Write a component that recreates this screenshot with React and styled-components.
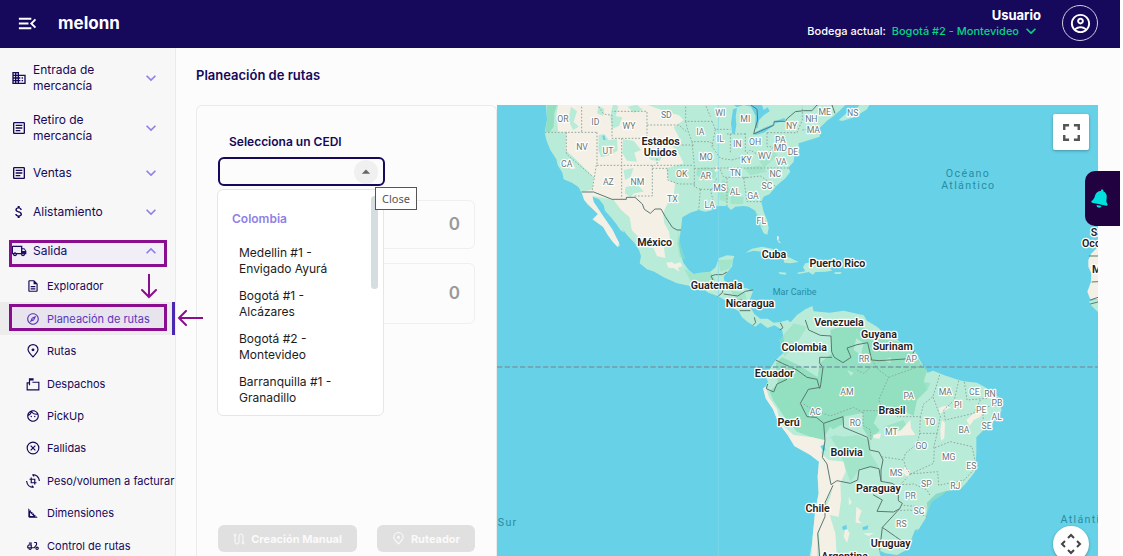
import React from "react";
import styled, { createGlobalStyle } from "styled-components";
import {
  MdMenuOpen,
  MdBusiness,
  MdOutlineArticle,
  MdAttachMoney,
  MdOutlineLocalShipping,
  MdOutlineDescription,
  MdOutlineExplore,
  MdOutlineFace,
  MdOutlineSquareFoot,
  MdOutlineDeliveryDining,
  MdOutlineAccountCircle,
  MdFullscreen,
  MdExpandMore,
  MdExpandLess,
  MdArrowDropUp,
} from "react-icons/md";
import { FaBell } from "react-icons/fa";

const PinIcon = ({ size }) => (
  <LineIcon width={size} height={size} viewBox="0 0 24 24">
    <path d="M12 22C6 16 3.500 13 3.500 9.500A8.500 8.500 0 0 1 20.500 9.500C20.500 13 18 16 12 22Z" />
    <circle cx="12" cy="10" r="1.500" fill="currentColor" />
  </LineIcon>
);

const MailboxIcon = ({ size }) => (
  <LineIcon width={size} height={size} viewBox="0 0 24 24">
    <path d="M5 10H2V22H22V9H11M6 14V3H12V5H7" />
  </LineIcon>
);

const FailedIcon = ({ size }) => (
  <LineIcon width={size} height={size} viewBox="0 0 24 24">
    <circle cx="12" cy="12" r="10" />
    <path d="M8 8L16 16M16 8L8 16" />
  </LineIcon>
);

const RotateIcon = ({ size }) => (
  <LineIcon width={size} height={size} viewBox="0 0 24 24">
    <path d="M9 6V15H18M6 9H15V18M11 1C18 1 22 5 23 12M11 1L14 4M13 23C6 23 2 19 1 12M13 23L10 20" />
  </LineIcon>
);

const RouteIcon = ({ size }) => (
  <LineIcon width={size} height={size} viewBox="0 0 24 24">
    <circle cx="4" cy="4" r="2" />
    <circle cx="20" cy="20" r="2" />
    <path d="M4 6V18A4 4 0 0 0 12 18V6A4 4 0 0 1 20 6V18" />
  </LineIcon>
);

const menu = [
  { name: "Entrada de mercancía", icon: MdBusiness, tall: true },
  { name: "Retiro de mercancía", icon: MdOutlineArticle, tall: true },
  { name: "Ventas", icon: MdOutlineArticle },
  { name: "Alistamiento", icon: MdAttachMoney },
  { name: "Salida", icon: MdOutlineLocalShipping, open: true },
];

const submenu = [
  { name: "Explorador", icon: MdOutlineDescription },
  { name: "Planeación de rutas", icon: MdOutlineExplore, active: true },
  { name: "Rutas", icon: PinIcon },
  { name: "Despachos", icon: MailboxIcon },
  { name: "PickUp", icon: MdOutlineFace },
  { name: "Fallidas", icon: FailedIcon },
  { name: "Peso/volumen a facturar", icon: RotateIcon },
  { name: "Dimensiones", icon: MdOutlineSquareFoot },
  { name: "Control de rutas", icon: MdOutlineDeliveryDining },
];

const cedis = [
  "Medellin #1 - Envigado Ayurá",
  "Bogotá #1 - Alcázares",
  "Bogotá #2 - Montevideo",
  "Barranquilla #1 - Granadillo",
];

// [text, x, y] in the units of the map group
const northStates = [
  ["OR", 198, 58], ["ID", 295, 66], ["WY", 396, 77], ["SD", 508, 45], ["WI", 670, 40],
  ["MI", 745, 58], ["NY", 884, 78], ["NH", 943, 58], ["MA", 949, 90], ["ME", 983, 35],
  ["NS", 1067, 40], ["IA", 610, 96], ["IL", 670, 118], ["IN", 721, 132], ["OH", 774, 125],
  ["PA", 850, 120], ["MD", 850, 144], ["DE", 888, 157], ["NV", 255, 141], ["UT", 333, 154],
  ["CA", 209, 192], ["MO", 627, 170], ["KY", 748, 181], ["WV", 803, 168], ["VA", 853, 187],
  ["AZ", 334, 246], ["NM", 421, 246], ["OK", 554, 223], ["AR", 626, 227], ["TN", 715, 219],
  ["NC", 835, 222], ["SC", 810, 259], ["MS", 668, 264], ["AL", 714, 275], ["GA", 768, 289],
  ["TX", 526, 296], ["LA", 638, 316], ["FL", 793, 363],
];

const southStates = [
  ["RR", 501, 118], ["AP", 643, 118], ["AM", 450, 216], ["PA", 635, 227], ["MA", 745, 216],
  ["CE", 832, 216], ["RN", 879, 222], ["PB", 900, 249], ["PI", 783, 256], ["PE", 853, 270],
  ["AL", 899, 291], ["SE", 869, 318], ["AC", 355, 275], ["RO", 475, 310], ["MT", 583, 337],
  ["TO", 699, 307], ["BA", 801, 331], ["GO", 673, 377], ["MG", 755, 412], ["ES", 823, 438],
  ["MS", 597, 460], ["SP", 688, 491], ["RJ", 775, 499], ["PR", 640, 529], ["SC", 666, 572],
  ["RS", 613, 612],
];

const northCountries = [
  ["Estados", 491, 126], ["Unidos", 490, 157], ["México", 473, 428], ["Cuba", 831, 465],
  ["Puerto Rico", 1021, 492], ["Guatemala", 659, 556], ["Nicaragua", 759, 610],
];

const southCountries = [
  ["Venezuela", 426, 9], ["Guyana", 546, 43], ["Surinam", 587, 81], ["Colombia", 322, 83],
  ["Ecuador", 232, 161], ["Brasil", 585, 273], ["Perú", 275, 308], ["Bolivia", 449, 399],
  ["Paraguay", 544, 506], ["Chile", 362, 565], ["Uruguay", 581, 672], ["Argentina", 443, 709],
];

const Labels = ({ items, as: Tag }) =>
  items.map(([text, x, y]) => (
    <Tag key={text + x} x={x} y={y}>
      {text}
    </Tag>
  ));

const Map = () => (
  <MapSvg viewBox="497 105 601 451" preserveAspectRatio="xMidYMid slice" role="img" aria-label="Mapa">
    <g transform="translate(497 100) scale(0.33333)">
      {/* North and Central America */}
      <Land d="M146 0L150 60 143 97 148 120 160 150 178 178 182 195 196 218 200 238 225 248 245 262 254 280 260 298 272 314 285 325 303 342 286 358 300 368 318 380 332 404 346 424 362 442 369 436 364 424 350 406 344 388 328 364 314 342 300 320 290 306 286 290 306 298 320 315 324 332 342 352 358 372 370 390 382 398 378 388 395 410 412 428 426 450 432 468 428 490 450 508 472 515 500 532 540 550 580 558 606 558 634 578 662 588 690 604 702 620 725 634 735 652 752 666 775 680 790 668 812 684 832 676 850 686 862 694 890 675 872 660 850 666 830 668 812 656 790 656 772 642 762 625 758 600 768 574 750 565 720 560 700 552 682 542 680 530 692 515 705 500 708 480 712 468 690 466 665 475 656 502 640 515 610 518 590 522 575 510 560 490 550 460 545 430 550 400 552 385 556 352 580 338 605 330 625 335 648 330 640 320 672 318 690 318 702 330 715 320 740 318 755 320 775 332 782 352 786 368 800 400 811 404 815 385 810 360 800 335 793 305 800 290 818 282 840 256 865 235 880 215 874 203 890 185 892 165 905 150 905 130 930 122 968 110 968 84 990 62 1010 48 1030 30 1060 0Z" />
      <Land d="M1025 60L1050 38 1080 24 1100 0H1125L1110 28 1072 52 1035 63Z" />
      <Dark d="M150 0H185L172 40 170 80 158 97 145 95 150 60Z" />
      <Cream d="M186 0L178 45 184 97H208L206 150 236 178 268 210 290 232 286 268 255 276 262 300 285 325 303 342 288 358 318 380 332 404 346 424 362 440 366 428 346 388 314 342 290 306 286 288 310 292 350 300 372 330 398 352 404 392 434 420 440 440 470 445 480 468 505 474 500 440 520 425 516 395 502 370 498 340 512 310 530 288 534 250 515 240 508 205 540 196 560 190 545 160 528 140 545 110 530 82 560 60 545 45 520 40 452 15V0Z" />
      <Cream d="M508 488L524 486 532 492 550 487 556 498 542 503 548 515 530 504 514 503Z" />
      <Land d="M178 130L195 150 210 178 232 205 262 225 284 250 270 252 240 222 215 210 190 190ZM305 105L322 102 335 120 360 118 362 152 340 165 312 172 304 150ZM378 118L410 122 432 150 412 158 420 185 390 182 376 160ZM380 210L410 204 400 232 384 240ZM385 262L420 252 440 275 412 280 400 292 384 280ZM350 0L364 22 356 48 376 52 366 78 345 86 340 50ZM305 18L322 26 318 48 300 40ZM222 20L240 34 230 66 246 80 228 90 214 60ZM330 300L352 306 372 330 398 355 404 390 425 412 440 440 420 430 390 405 370 375 348 350ZM392 20L420 14 438 30 410 38ZM448 160L478 168 500 160 488 184 462 180Z" />
      <Dark d="M600 205L632 200 660 212 654 235 620 240 598 225ZM680 235L700 270 690 305 668 300 664 262ZM740 205L790 196 810 215 760 226ZM780 172L830 150 842 165 800 205ZM560 505L590 522 640 515 655 540 620 552 582 545ZM665 480L708 478 700 505 670 515ZM700 570L745 580 750 610 720 600ZM545 395L552 440 566 480 548 470 540 430ZM775 335L792 350 800 385 790 378ZM700 285L740 290 738 312 700 312Z" opacity="0.55" />
      <Cream d="M652 202L662 198 665 212 654 216ZM195 182L220 178 236 205 222 208Z" />
      {/* lakes */}
      <Water d="M708 28L720 24 716 50 718 75 714 100 706 102 702 70ZM690 0H790L800 30 812 22 818 34 800 46 786 60 782 84 774 86 776 48 762 20 740 15 720 22ZM770 100L800 84 830 72 828 78 800 98 775 105ZM828 66L862 54 866 60 836 70ZM316 108L322 106 326 120 319 120Z" />
      {/* islands */}
      <Land d="M745 458L765 446 795 440 825 446 850 462 880 474 905 486 880 490 862 488 860 478 830 474 800 456 770 452ZM845 516L868 518 866 524 848 522ZM900 518L925 514 918 502 925 490 950 486 975 494 1000 506 1005 512 985 515 955 516 948 524 935 516 905 522ZM1012 517L1034 516 1030 522 1014 522Z" />
      <Cream d="M840 408L846 410 844 422 852 428 846 428 840 418Z" />
      {/* west coast of Africa */}
      <Cream d="M1803 440L1782 462 1774 480 1774 500 1783 520 1782 545 1771 575 1780 598 1803 598Z" />
      <Land d="M1803 598L1776 604 1784 618 1803 636Z" />
      <Border d="M1803 468H1776M1803 545L1784 546M1803 592L1780 600M1803 606L1780 612" />
      <StateLine d="M143 97H300M208 97V162L290 232M300 97V196M254 0V97M305 20L320 42 345 46V115H450V34H345M450 75H545L570 96M300 196H590M298 196L286 270M374 115V296M466 196V288H412M466 205H512V240L545 252H598M566 0V64H645M566 64L572 90 585 125H640L650 140M585 125L592 196V260L610 268M592 205H668L680 232H750M610 268H645M610 268L605 330M645 268L660 232M690 234V318M740 234L750 305H795M740 234L790 228 840 262M705 180L740 170 760 150 800 175 830 140M650 204H875M645 64L655 88H700M655 88L645 140 670 175 705 180M700 102V160M745 100V160M690 102H745M810 98V140L890 142M810 98H900M900 98L916 60V20M916 90L968 86M620 0L640 50M480 166V196M545 135H590M640 268L650 310" />
      <Border d="M254 276L290 276 345 298H388V292H414L436 312 442 328 460 340 474 327H492L505 350 526 382 540 390H552M762 15L780 28 782 60 774 86 770 102 830 76 832 64H866L870 56 895 35 920 32H945L960 15 980 10 990 0M1005 15L1014 40M648 540L642 528 655 524H676L690 516M662 590L676 578 682 552M680 582L722 588 745 574 768 570M690 605L735 600M728 632H760M772 652L776 668 768 676M850 668L858 684 848 690" />
      <Seam d="M664 15V1380" />

      <g transform="translate(600 660)">
        {/* South America */}
        <Land d="M255 28L262 70 258 100 236 120 222 142 205 168 213 185 200 208 206 235 228 268 245 310 272 345 292 378 340 405 366 425 362 470 365 520 355 570 350 620 345 670 336 720H555L545 690 565 700 600 705 624 692 648 655 670 620 686 595 692 565 690 548 718 522 752 512 790 508 810 486 834 455 838 400 838 352 862 328 892 302 914 272 905 232 862 200 840 188 800 184 778 178 740 165 708 152 692 158 680 140 664 112 655 95 624 80 602 60 562 40 540 20 510 2 500 -14 440 -28 398 -22 350 -26 346 -42 325 -32 300 -15 282 5Z" />
        <Dark d="M400 30L450 14 500 22 530 52 600 64 655 100 672 132 690 152 680 185 690 210 660 240 650 288 600 262 545 275 530 310 548 330 520 360 497 325 498 278 440 290 430 350 400 320 385 345 384 362 340 350 300 335 262 290 228 240 218 215 242 190 236 130 255 112 310 138 362 172 368 130 405 100Z" />
        <Dark d="M246 60L290 10 330 20 300 70 262 110ZM385 360L440 330 520 360 520 400 545 440 490 445 460 486 430 400 400 350Z" opacity="0.55" />
        <Dark d="M690 548L715 522 750 512 735 526 705 545 690 580ZM620 690L655 640 668 622 640 665ZM560 320L620 300 632 325 580 345ZM640 178L700 190 690 212ZM230 205L262 232 300 262 330 300 300 290 260 260Z" opacity="0.7" />
        <Land d="M478 55L500 70 492 105 470 90ZM405 330L430 316 470 325 480 345 440 350 412 345ZM296 68L330 40 352 60 390 50 372 90 340 100 300 100ZM450 150L470 158 462 168ZM560 120L582 112 580 130Z" />
        <Cream d="M198 205L206 200 216 232 240 268 250 310 290 345 345 352 382 360 372 400 395 420 440 425 446 455 430 490 432 540 425 590 398 585 415 640 420 720H370L366 640 380 580 400 530 408 500 390 470 378 415 366 425 340 405 292 378 272 345 245 310 228 268 206 235Z" />
        <Cream d="M366 425L378 415 390 470 410 498 385 550 380 600 362 640 360 720H342L348 640 355 570 365 520 362 470Z" />
        <Cream d="M735 300L744 310 742 355 732 362 730 330ZM528 345L552 340 548 356 530 354ZM570 330L610 332 640 300 642 325 655 345 630 346 600 348ZM622 440L640 452 634 474 618 458ZM726 264L742 258 762 262 738 274 728 284ZM808 300L828 282 862 272 850 290 830 300 818 318ZM478 560L494 572 484 600 495 610 476 608ZM455 530L464 548 456 556ZM446 620L458 640 450 668 440 650ZM500 640L530 640 514 648ZM786 320L806 318 808 340 790 336Z" />
        <Water d="M370 378L382 374 386 392 376 390ZM435 620L448 614 450 628 438 630ZM496 622L514 616 512 628 498 630ZM642 660L654 630 664 628 652 652Z" />
        <Border d="M325 0L335 30 370 46 402 48 404 96 412 112 438 128 462 112 450 84 480 74 512 68 524 120 546 122 640 116 652 92M405 112H368V130L378 142 370 202 334 208 310 250 330 290 358 292 380 310 438 290 440 322 512 352 518 390 546 396 558 420 552 450 552 484 585 490 604 502 604 542 616 550 608 566 590 576 540 574 556 540 528 524M236 120L256 130 300 150 330 172 360 178 368 206M270 178L240 192 230 216 208 206 212 192M380 310L384 362 376 412 390 432 402 494 420 482 460 490 482 480 486 450 520 440 546 446 552 484M408 496L384 548V590L362 640 368 710M608 566L556 622 548 690M556 622L596 650 638 680" />
        <StateLine d="M524 120L545 150 575 172 545 240 560 272H498V316L520 330 522 362M575 172L650 145 682 134M320 252L345 268 400 288 470 262 498 278M480 150L500 160 524 140M728 165L708 230 680 252 670 290H600M670 290L668 340 660 372 625 400 620 420 552 410M668 340L720 340 730 290 708 230M785 182L772 240 740 270 745 300M802 186L810 240 870 235M850 240L830 280 745 300M870 225L905 235M720 340L710 385 760 365 825 380 838 440 802 480 725 496 722 455 640 462 625 440 620 420M640 462L610 494 650 492 690 510 700 528M620 556L690 562M862 262L895 256M858 282L860 320M640 462L710 430 712 385M600 572L640 570 690 590" />
        <Labels as={StateLabel} items={southStates} />
        <Labels as={CountryLabel} items={southCountries} />
      </g>

      <Equator d="M0 801H1803" />
      <Labels as={StateLabel} items={northStates} />
      <Labels as={CountryLabel} items={northCountries} />
      {/* countries that run past the east edge */}
      <CountryLabel $start x={1781} y={398}>Sahara</CountryLabel>
      <CountryLabel $start x={1755} y={431}>Occidental</CountryLabel>
      <CountryLabel $start x={1785} y={508}>Mauritania</CountryLabel>
      <SeaLabel x={893} y={577}>Mar Caribe</SeaLabel>
      <OceanLabel x={1413} y={221}>Océano</OceanLabel>
      <OceanLabel x={1414} y={258}>Atlántico</OceanLabel>
      <OceanLabel x={1772} y={1259}>Atlántico</OceanLabel>
      <OceanLabel x={32} y={1269}>Sur</OceanLabel>
    </g>
  </MapSvg>
);

const App = () => {
  return (
    <Shell>
      <Global />
      <Header>
        <IconButton aria-label="Menú">
          <MdMenuOpen size={23} />
        </IconButton>
        <Brand href="#">melonn</Brand>
        <Account>
          <strong>Usuario</strong>
          <Warehouse>
            Bodega actual:
            <button>
              Bogotá #2 - Montevideo <MdExpandMore size={20} />
            </button>
          </Warehouse>
        </Account>
        <Avatar aria-label="Perfil">
          <MdOutlineAccountCircle size={23} />
        </Avatar>
      </Header>

      <Body>
        <Sidebar>
          {menu.map(({ name, icon: Icon, tall, open }) => (
            <MenuItem key={name} $tall={tall} aria-expanded={!!open}>
              {open && <Highlight $top={9} />}
              <Icon size={16} />
              <span>{name}</span>
              {open ? <MdExpandLess size={20} /> : <MdExpandMore size={20} />}
            </MenuItem>
          ))}
          <SubMenu>
            {submenu.map(({ name, icon: Icon, active }) => (
              <SubItem key={name} href="#" $active={active}>
                {active && <Highlight $top={2} />}
                <Icon size={14} />
                <span>{name}</span>
              </SubItem>
            ))}
            <ArrowDown viewBox="0 0 16 26">
              <path d="M8 0V23M1 16L8 23L15 16" />
            </ArrowDown>
            <ArrowLeft viewBox="0 0 26 16">
              <path d="M26 8H2M9 1L2 8L9 15" />
            </ArrowLeft>
          </SubMenu>
        </Sidebar>

        <Main>
          <h1>Planeación de rutas</h1>
          <Content>
            <Panel>
              <label htmlFor="cedi">Selecciona un CEDI</label>
              <Combo>
                <input id="cedi" type="text" role="combobox" aria-expanded="true" aria-controls="cedis" />
                <button aria-label="Close">
                  <MdArrowDropUp size={20} />
                </button>
                <Options>
                  <h2>Colombia</h2>
                  <ul id="cedis" role="listbox">
                    {cedis.map((cedi) => (
                      <li key={cedi} role="option" aria-selected="false">
                        {cedi}
                      </li>
                    ))}
                  </ul>
                  <Thumb />
                </Options>
                <Tip role="tooltip">Close</Tip>
              </Combo>
              <Counter $height={49}>0</Counter>
              <Counter $height={61}>0</Counter>
              <Actions>
                <Action disabled $grow={139}>
                  <RouteIcon size={12} /> Creación Manual
                </Action>
                <Action disabled $grow={98}>
                  <PinIcon size={13} /> Ruteador
                </Action>
              </Actions>
            </Panel>
            <MapArea>
              <Map />
              <MapButton aria-label="Pantalla completa">
                <MdFullscreen size={29} />
              </MapButton>
              <MapButton $round aria-label="Controles de cámara">
                <svg width="22" height="22" viewBox="0 0 22 22">
                  <path d="M8 5L11 2L14 5M8 17L11 20L14 17M5 8L2 11L5 14M17 8L20 11L17 14" />
                </svg>
              </MapButton>
            </MapArea>
          </Content>
        </Main>
      </Body>

      <Notifications aria-label="Notificaciones">
        <FaBell size={19} />
      </Notifications>
    </Shell>
  );
};

export default App;

const Global = createGlobalStyle`
  * {
    box-sizing: border-box;
  }
  body {
    margin: 0;
    background: #ffffff;
    color: #16085a;
    font-family: Inter, "Liberation Sans", sans-serif;
    font-size: 12px;
    line-height: 16px;
  }
  button, input {
    font: inherit;
    color: inherit;
    margin: 0;
    padding: 0;
    border: 0;
    background: none;
  }
  h1, h2, ul {
    margin: 0;
    padding: 0;
  }
  a {
    color: inherit;
    text-decoration: none;
  }
`;

const Shell = styled.div`
  position: relative;
  display: flex;
  flex-direction: column;
  height: 100vh;
  overflow: hidden;
  margin-right: 3px;
`;

const LineIcon = styled.svg`
  flex: none;
  fill: none;
  stroke: currentColor;
  stroke-width: 2;
`;

const Header = styled.header`
  display: flex;
  align-items: center;
  flex: none;
  height: 48px;
  padding: 0 22px 2px 16px;
  background: #16085a;
  color: #ffffff;
`;

const IconButton = styled.button`
  display: flex;
  width: 42px;
`;

const Brand = styled.a`
  font-size: 17px;
  font-weight: 700;
`;

const Account = styled.div`
  display: flex;
  flex-direction: column;
  align-items: flex-end;
  margin-left: auto;
  margin-right: 21px;
  strong {
    font-size: 13px;
  }
`;

const Warehouse = styled.div`
  display: flex;
  align-items: center;
  gap: 6px;
  font-size: 11px;
  font-weight: 500;
  button {
    display: flex;
    align-items: center;
    gap: 2px;
    height: 16px;
    color: #06d584;
  }
`;

const Avatar = styled.button`
  display: flex;
  align-items: center;
  justify-content: center;
  width: 36px;
  height: 36px;
  border: 1px solid #d0cde0;
  border-radius: 50%;
`;

const Body = styled.div`
  display: flex;
  flex: 1;
  min-height: 0;
`;

const Sidebar = styled.nav`
  flex: none;
  width: 176px;
  padding-top: 5px;
  background: #f7f7f7;
  border-right: 1px solid #ebebeb;
`;

const MenuItem = styled.button`
  position: relative;
  display: flex;
  align-items: center;
  width: 100%;
  height: ${({ $tall }) => ($tall ? 50 : 39)}px;
  padding: 0 14px 0 11px;
  text-align: left;
  span {
    flex: 1;
    padding: 0 28px 0 6px;
  }
  svg:last-child {
    color: #8f7fe6;
  }
`;

const SubMenu = styled.div`
  position: relative;
  display: grid;
  grid-template-columns: minmax(0, 1fr);
  grid-auto-rows: 1fr;
  height: 292px;
`;

const SubItem = styled.a`
  position: relative;
  display: flex;
  align-items: center;
  gap: 7px;
  padding-left: 26px;
  font-size: 11px;
  white-space: nowrap;
  color: ${({ $active }) => ($active ? "#5a35b8" : "#16085a")};
  background: ${({ $active }) => ($active ? "#ececec" : "transparent")};
  border-right: 3px solid ${({ $active }) => ($active ? "#4a27b0" : "transparent")};
`;

// hand-drawn guide marks laid over the menu
const Highlight = styled.i`
  position: absolute;
  top: ${({ $top }) => $top}px;
  left: 9px;
  width: 158px;
  height: 27px;
  border: 3px solid #8a0d8f;
  background: rgba(138, 80, 255, 0.05);
  pointer-events: none;
`;

const Arrow = styled.svg`
  position: absolute;
  fill: none;
  stroke: #8a0d8f;
  stroke-width: 2;
  stroke-linecap: round;
  z-index: 2;
`;

const ArrowDown = styled(Arrow)`
  top: 4px;
  left: 141px;
  width: 16px;
  height: 26px;
`;

const ArrowLeft = styled(Arrow)`
  top: 40px;
  left: 177px;
  width: 26px;
  height: 16px;
`;

const Main = styled.main`
  display: flex;
  flex-direction: column;
  flex: 1;
  min-width: 0;
  padding: 19px 22px 0 20px;
  background: #fcfcfc;
  h1 {
    font-size: 13px;
    font-weight: 600;
    margin-bottom: 22px;
  }
`;

const Content = styled.div`
  display: flex;
  flex: 1;
  min-height: 0;
`;

const Panel = styled.section`
  display: flex;
  flex-direction: column;
  flex: none;
  width: 301px;
  padding: 28px 21px 4px;
  border: 1px solid #ebebeb;
  border-bottom: 0;
  border-radius: 6px 6px 0 0;
  label {
    padding-left: 11px;
    font-weight: 600;
  }
`;

const Combo = styled.div`
  position: relative;
  display: flex;
  align-items: center;
  width: 167px;
  height: 29px;
  margin: 7px 0 14px;
  padding: 0 5px;
  border: 2px solid #16085a;
  border-radius: 6px;
  input {
    flex: 1;
    min-width: 0;
    outline: 0;
  }
  button {
    display: flex;
    align-items: center;
    justify-content: center;
    width: 24px;
    height: 24px;
    border-radius: 50%;
    background: #f0f0f0;
    color: #666666;
  }
`;

const Options = styled.div`
  position: absolute;
  top: 30px;
  left: -3px;
  width: 167px;
  height: 227px;
  padding: 21px 14px 0;
  background: #ffffff;
  border: 1px solid #e6e6e6;
  border-radius: 6px;
  color: #1c1c1c;
  h2 {
    font-size: 12px;
    font-weight: 600;
    color: #8f7fe6;
    margin-bottom: 18px;
  }
  ul {
    display: flex;
    flex-direction: column;
    gap: 11px;
    padding-left: 7px;
    list-style: none;
  }
  li {
    width: 104px;
  }
`;

const Thumb = styled.div`
  position: absolute;
  top: 6px;
  right: 5px;
  width: 7px;
  height: 93px;
  border-radius: 4px;
  background: #d5dde0;
`;

const Tip = styled.div`
  position: absolute;
  top: 28px;
  left: 155px;
  padding: 1px 6px;
  border: 1px solid #555555;
  background: #ffffff;
  color: #555555;
  font-family: "Noto Sans", sans-serif;
  line-height: 19px;
  font-size: 11px;
`;

const Counter = styled.div`
  display: flex;
  flex: none;
  align-items: center;
  justify-content: flex-end;
  height: ${({ $height }) => $height}px;
  margin-bottom: 14px;
  padding: 0 14px 2px 0;
  border: 1px solid #efefef;
  border-radius: 6px;
  color: #999999;
  font-size: 17px;
  font-weight: 600;
`;

const Actions = styled.div`
  display: flex;
  gap: 20px;
  margin-top: auto;
`;

const Action = styled.button`
  display: flex;
  align-items: center;
  justify-content: center;
  gap: 6px;
  flex: ${({ $grow }) => $grow} 1 0;
  height: 27px;
  border-radius: 6px;
  background: #e0e0e0;
  color: #fafafa;
  font-size: 11px;
  font-weight: 700;
  white-space: nowrap;
`;

const MapArea = styled.section`
  position: relative;
  flex: 1;
  min-width: 0;
  overflow: hidden;
  background: #67d1e7;
`;

const MapSvg = styled.svg`
  display: block;
  width: 100%;
  height: 100%;
`;

const MapButton = styled.button`
  position: absolute;
  right: 9px;
  ${({ $round }) => ($round ? "bottom: -6px;" : "top: 9px;")}
  display: flex;
  align-items: center;
  justify-content: center;
  width: 36px;
  height: 36px;
  border-radius: ${({ $round }) => ($round ? "50%" : "2px")};
  background: #ffffff;
  color: #555555;
  box-shadow: 0 1px 3px rgba(0, 0, 0, 0.3);
  path {
    ${({ $round }) => $round && "fill: none; stroke: #444444; stroke-width: 2;"}
  }
`;

const Notifications = styled.button`
  position: absolute;
  top: 171px;
  right: 0;
  display: flex;
  align-items: center;
  justify-content: center;
  width: 35px;
  height: 55px;
  padding-right: 4px;
  border-radius: 10px 0 0 10px;
  background: #220140;
  color: #00e0dc;
  svg {
    transform: rotate(12deg);
  }
`;

const Land = styled.path`
  fill: #b9ecd8;
`;

const Dark = styled.path`
  fill: #92e0c0;
`;

const Cream = styled.path`
  fill: #f5f0e6;
`;

const Water = styled.path`
  fill: #67d1e7;
`;

const Border = styled.path`
  fill: none;
  stroke: #59776f;
  stroke-width: 3;
`;

const StateLine = styled.path`
  fill: none;
  stroke: #8fa9a0;
  stroke-width: 3;
  stroke-dasharray: 5 5;
`;

const Seam = styled.path`
  stroke: #85d9ea;
  stroke-width: 2;
`;

const Equator = styled.path`
  stroke: #779aa6;
  stroke-width: 5;
  stroke-dasharray: 16 7;
`;

const MapLabel = styled.text`
  font-family: Roboto, sans-serif;
  text-anchor: ${({ $start }) => ($start ? "start" : "middle")};
  dominant-baseline: central;
  paint-order: stroke;
  stroke-linejoin: round;
`;

const StateLabel = styled(MapLabel)`
  font-size: 26px;
  fill: #66777a;
  stroke: #ffffff;
  stroke-width: 7px;
`;

const CountryLabel = styled(MapLabel)`
  font-size: 32px;
  font-weight: 600;
  fill: #222222;
  stroke: #ffffff;
  stroke-width: 8px;
`;

const SeaLabel = styled(MapLabel)`
  font-size: 27px;
  fill: #278da3;
`;

const OceanLabel = styled(MapLabel)`
  font-size: 32px;
  letter-spacing: 4px;
  fill: #278da3;
`;
